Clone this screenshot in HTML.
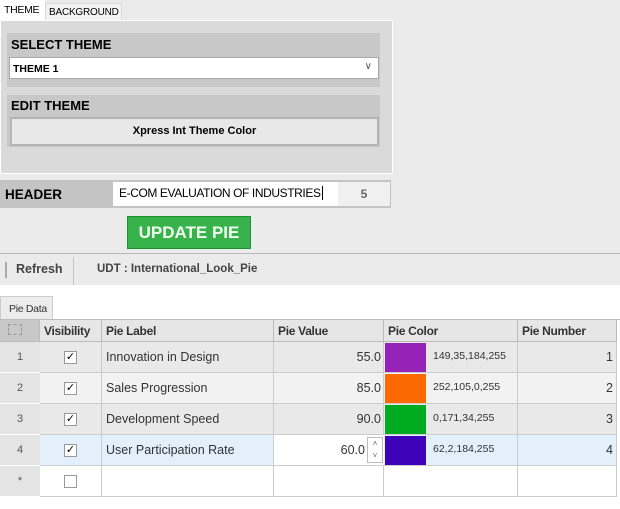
<!DOCTYPE html>
<html><head><style>
*{box-sizing:border-box;margin:0;padding:0}
body{width:620px;height:509px;background:#fff;font-family:"Liberation Sans",sans-serif;position:relative;overflow:hidden}
.a{position:absolute;white-space:nowrap}
.b{font-weight:bold}
</style></head><body>
<div class="a" style="left:0;top:0;width:620px;height:285px;background:#ebebeb"></div>
<div class="a" style="left:0;top:0;width:45px;height:21px;background:#fff;font-size:10.5px;padding:4px 0 0 4px;letter-spacing:-0.3px">THEME</div>
<div class="a" style="left:45px;top:3px;width:77px;height:18px;background:#f3f3f3;border:1px solid #d8d8d8;font-size:10px;padding:3px 0 0 3px;letter-spacing:-0.2px">BACKGROUND</div>
<div class="a" style="left:0;top:20px;width:393px;height:154px;background:#dadada;border:1px solid #fff"></div>
<div class="a" style="left:7px;top:33px;width:373px;height:54px;background:#c8c8c8"></div>
<div class="a b" style="left:11px;top:37px;font-size:13px">SELECT THEME</div>
<div class="a" style="left:9px;top:57px;width:370px;height:22px;background:#fff;border:1px solid #a8a8a8;font-size:10.5px;font-weight:bold;padding:5px 0 0 3px">THEME 1<span class="a" style="right:6px;top:3px;font-weight:normal;color:#555;font-size:10px">&#8744;</span></div>
<div class="a" style="left:7px;top:95px;width:373px;height:52px;background:#c8c8c8"></div>
<div class="a b" style="left:11px;top:98px;font-size:13px">EDIT THEME</div>
<div class="a b" style="left:10px;top:117px;width:369px;height:29px;background:#e8e8e8;border:2px solid #b4b4b4;font-size:11px;text-align:center;padding-top:6px">Xpress Int Theme Color</div>
<div class="a" style="left:0;top:180px;width:391px;height:28px;background:#c4c4c4"></div>
<div class="a b" style="left:5px;top:187px;font-size:13.5px">HEADER</div>
<div class="a" style="left:113px;top:182px;width:225px;height:24px;background:#fff;font-size:12px;padding:4px 0 0 6px;letter-spacing:-0.4px;overflow:hidden">E-COM EVALUATION OF INDUSTRIES<span style="border-left:1px solid #000;margin-left:1px"></span></div>
<div class="a b" style="left:338px;top:182px;width:52px;height:24px;background:#f0f0f0;font-size:12px;color:#666;text-align:center;padding-top:5px">5</div>
<div class="a b" style="left:127px;top:216px;width:124px;height:33px;background:#38b24a;border:1px solid #1f8f30;color:#f2fff2;font-size:17px;text-align:center;padding-top:6px">UPDATE PIE</div>
<div class="a" style="left:0;top:253px;width:620px;height:1px;background:#b8b8b8"></div>
<div class="a" style="left:5px;top:262px;width:2px;height:16px;border-left:1px solid #aaa;border-right:1px solid #aaa"></div>
<div class="a b" style="left:16px;top:262px;font-size:12.5px;color:#444">Refresh</div>
<div class="a" style="left:73px;top:257px;width:1px;height:28px;background:#c4c4c4"></div>
<div class="a b" style="left:97px;top:263px;font-size:11.5px;color:#444">UDT : International_Look_Pie</div>
<div class="a" style="left:0;top:296px;width:53px;height:24px;background:#ececec;border:1px solid #ccc;border-bottom:none;font-size:10.5px;padding:6px 0 0 8px;color:#333;letter-spacing:-0.3px">Pie Data</div>
<div class="a" style="left:0;top:319px;width:620px;height:178px;border-top:1px solid #bbb"></div>
<div id="g"></div>
<script>
var cols=[0,40,102,274,384,518,617];
var rows=[["1","Innovation in Design","55.0","#9523b8","149,35,184,255","1"],["2","Sales Progression","85.0","#fc6900","252,105,0,255","2"],["3","Development Speed","90.0","#00ab22","0,171,34,255","3"],["4","User Participation Rate","60.0","#3e02b8","62,2,184,255","4"]];
var h='';
var hd=["","Visibility","Pie Label","Pie Value","Pie Color","Pie Number"];
for(var c=0;c<6;c++){h+='<div class="a b" style="left:'+cols[c]+'px;top:320px;width:'+(cols[c+1]-cols[c])+'px;height:22px;background:'+(c==0?'#c8c8c8':'#e6e6e6')+';border-right:1px solid #bbb;border-bottom:1px solid #bbb;font-size:12px;color:#333;padding:4px 0 0 4px;letter-spacing:-0.3px">'+(c==0?'<span style="display:inline-block;margin-left:4px;width:14px;height:11px;border:1px dashed #999"></span>':hd[c])+'</div>';}
var bgs=['#e9e9e9','#f2f2f2','#e9e9e9','#e3effa'];
for(var r=0;r<5;r++){var y=342+r*31;var d=rows[r];var bg=r<4?bgs[r]:'#fff';
h+='<div class="a" style="left:0;top:'+y+'px;width:40px;height:31px;background:#e4e4e4;border-bottom:1px solid #fff;font-size:11px;color:#555;text-align:center;padding-top:9px">'+(d?d[0]:'*')+'</div>';
h+='<div class="a" style="left:40px;top:'+y+'px;width:577px;height:31px;background:'+bg+';border-bottom:1px solid #ccc"></div>';
for(var c=1;c<6;c++)h+='<div class="a" style="left:'+(cols[c+1]-1)+'px;top:'+y+'px;width:1px;height:31px;background:#ccc"></div>';
h+='<div class="a" style="left:64px;top:'+(y+9)+'px;width:13px;height:13px;border:1px solid #999;background:#fff;font-size:11px;line-height:11px;text-align:center">'+(d?'&#10003;':'')+'</div>';
if(d){
h+='<div class="a" style="left:106px;top:'+(y+8)+'px;font-size:12.5px;color:#333">'+d[1]+'</div>';
if(r==3){h+='<div class="a" style="left:274px;top:'+y+'px;width:110px;height:30px;background:#fff"></div><div class="a" style="left:367px;top:'+(y+2)+'px;width:16px;height:26px;border:1px solid #bbb;font-size:8px;color:#666;text-align:center;line-height:12px">&#708;<br>&#709;</div>';}
h+='<div class="a" style="left:300px;top:'+(y+8)+'px;width:'+(r==3?65:81)+'px;text-align:right;font-size:12.5px;color:#333">'+d[2]+'</div>';
h+='<div class="a" style="left:385px;top:'+(y+1)+'px;width:41px;height:29px;background:'+d[3]+'"></div>';
h+='<div class="a" style="left:433px;top:'+(y+8)+'px;font-size:10.5px;color:#333">'+d[4]+'</div>';
h+='<div class="a" style="left:560px;top:'+(y+8)+'px;width:53px;text-align:right;font-size:12.5px;color:#333">'+d[5]+'</div>';}
}
document.getElementById('g').innerHTML=h;
</script>
</body></html>
